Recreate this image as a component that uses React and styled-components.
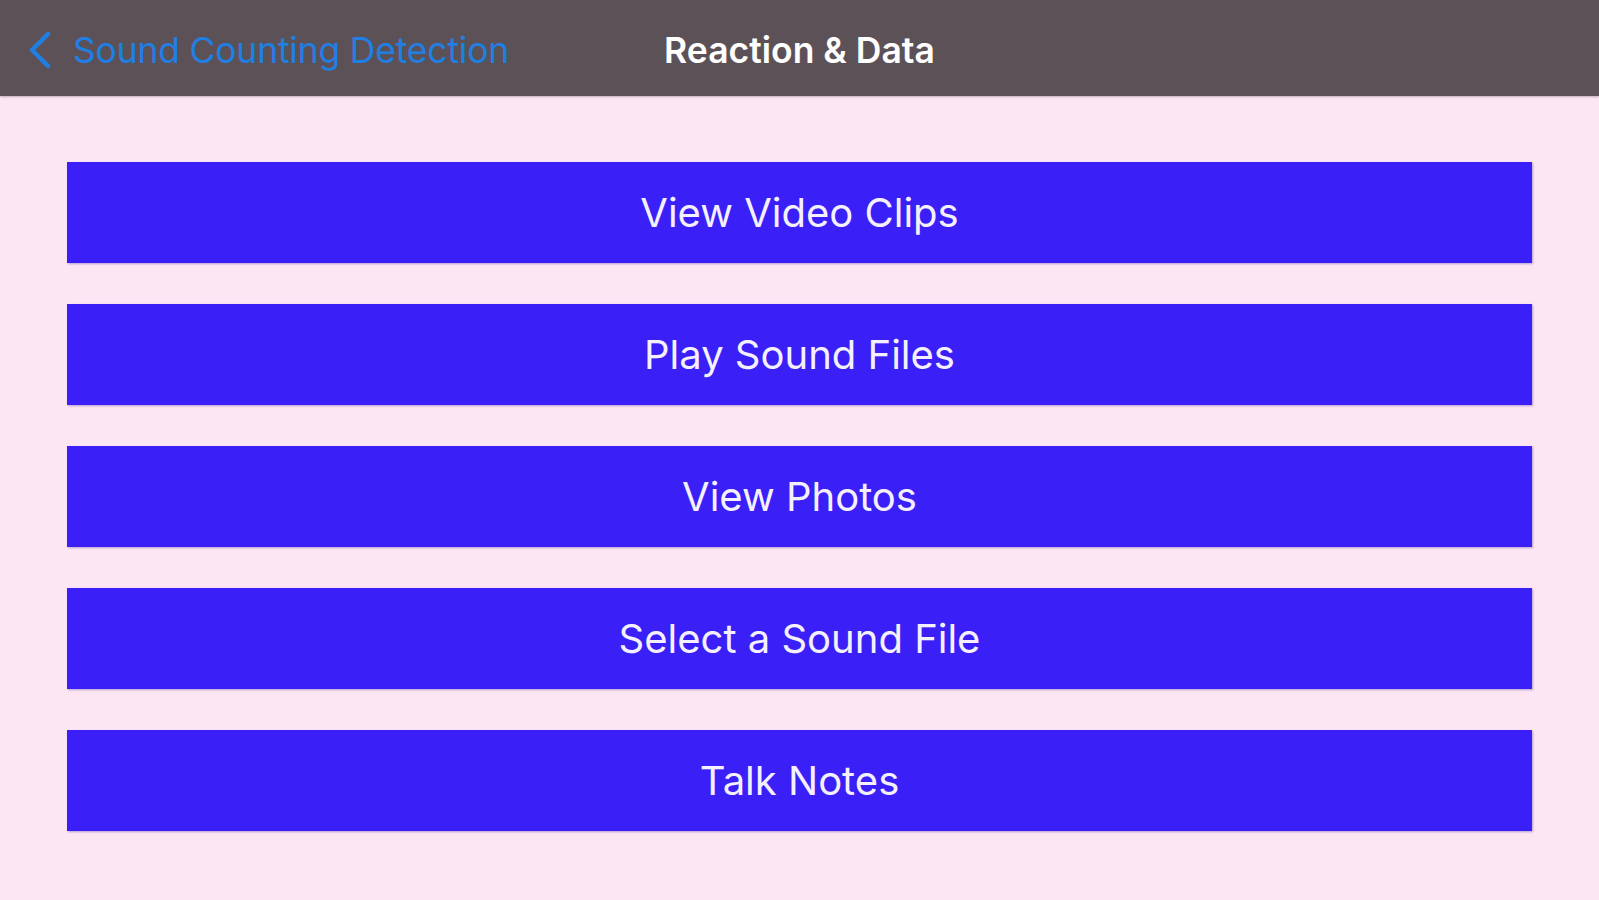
import React from 'react'
import styled, { createGlobalStyle } from 'styled-components'

const GlobalStyle = createGlobalStyle`
  html, body {
    margin: 0;
    padding: 0;
    background: #fde6f4;
    font-family: Inter, "Noto Sans", "Liberation Sans", sans-serif;
  }
`

const Page = styled.div`
  width: 1599px;
  height: 900px;
  background: #fde6f4;
  display: flex;
  flex-direction: column;
`

const NavBar = styled.div`
  height: 96px;
  box-sizing: border-box;
  padding-top: 4px;
  flex-shrink: 0;
  background: #5d5158;
  display: grid;
  grid-template-columns: 1fr auto 1fr;
  align-items: center;
  box-shadow: 0 1px 2px rgba(0, 0, 0, 0.25);
`

const BackButton = styled.div`
  display: flex;
  align-items: center;
  gap: 21px;
  padding-left: 28px;
  color: #1f7fe3;
  font-size: 35.5px;
  letter-spacing: -0.2px;
`

const Title = styled.div`
  color: #ffffff;
  font-size: 35.5px;
  font-weight: 600;
`

const Content = styled.div`
  display: flex;
  flex-direction: column;
  gap: 41px;
  padding: 66px 67px 0;
`

const MenuButton = styled.button`
  height: 101px;
  border: none;
  background: #3a1ff6;
  color: #f4f0ff;
  font-family: inherit;
  font-size: 40px;
  box-shadow: 1px 1px 2px rgba(40, 20, 140, 0.35);
  cursor: pointer;
`

const items = [
  'View Video Clips',
  'Play Sound Files',
  'View Photos',
  'Select a Sound File',
  'Talk Notes',
]

export default function App() {
  return (
    <Page>
      <GlobalStyle />
      <NavBar>
        <BackButton>
          <svg width="24" height="38" viewBox="0 0 24 38" fill="none">
            <path d="M20 3 L4 19 L20 35" stroke="#1f7fe3" strokeWidth="4.5" strokeLinecap="round" strokeLinejoin="round" />
          </svg>
          Sound Counting Detection
        </BackButton>
        <Title>Reaction &amp; Data</Title>
        <div />
      </NavBar>
      <Content>
        {items.map((label) => (
          <MenuButton key={label}>{label}</MenuButton>
        ))}
      </Content>
    </Page>
  )
}
